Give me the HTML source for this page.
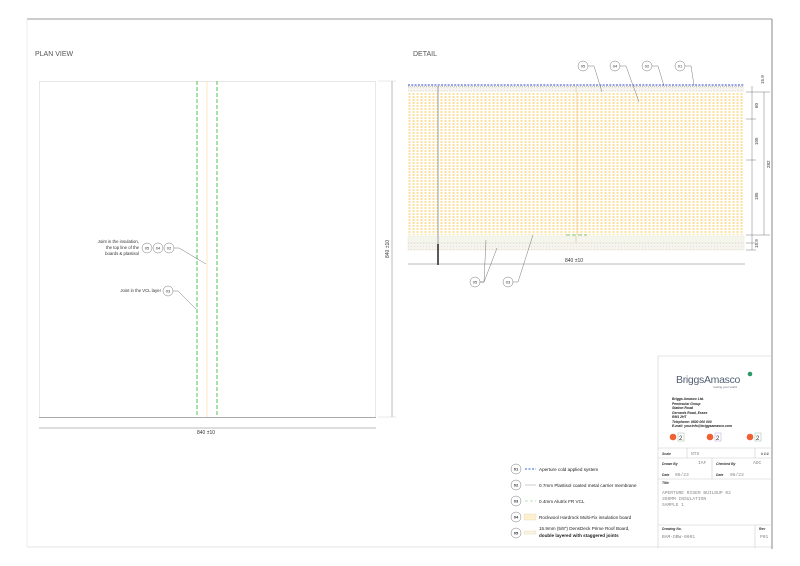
<!DOCTYPE html>
<html><head><meta charset="utf-8"><style>
html,body{margin:0;padding:0;background:#fff;width:800px;height:566px;overflow:hidden}
svg{display:block;font-family:"Liberation Sans",sans-serif}
</style></head><body>
<svg width="800" height="566" viewBox="0 0 800 566" xmlns="http://www.w3.org/2000/svg">
<defs>
<pattern id="ins" width="4" height="3" patternUnits="userSpaceOnUse">
<rect x="0.5" y="0" width="2" height="2" fill="#fbe0a0"/>
</pattern>
<pattern id="brd" width="3" height="3" patternUnits="userSpaceOnUse">
<rect width="3" height="3" fill="#f6f4ee"/><rect x="0" y="0" width="1" height="1" fill="#e4e0d4"/>
</pattern>
</defs>
<line x1="27" y1="19" x2="772" y2="19" stroke="#999" stroke-width="1"/>
<line x1="27" y1="19" x2="27" y2="547" stroke="#eee" stroke-width="1"/>
<line x1="27" y1="547" x2="772" y2="547" stroke="#e6e6e6" stroke-width="1"/>
<line x1="772" y1="19" x2="772" y2="549" stroke="#888" stroke-width="1"/>

<text x="35" y="56" font-size="7" fill="#555">PLAN VIEW</text>
<text x="413" y="56" font-size="7" fill="#555">DETAIL</text>

<rect x="39.5" y="81.5" width="336" height="336" fill="none" stroke="#e8e8e8"/>
<line x1="39" y1="417.5" x2="376" y2="417.5" stroke="#aaa" stroke-width="1"/>
<line x1="197" y1="81" x2="197" y2="417" stroke="#7ccf7c" stroke-width="1.3" stroke-dasharray="4,2"/>
<line x1="217" y1="81" x2="217" y2="417" stroke="#7ccf7c" stroke-width="1.3" stroke-dasharray="4,2"/>
<line x1="207" y1="81" x2="207" y2="417" stroke="#fbe3b0" stroke-width="0.8"/>
<line x1="39" y1="428" x2="376" y2="428" stroke="#555" stroke-width="0.4"/>
<text x="197" y="434" font-size="5" fill="#333">840 ±10</text>
<line x1="392" y1="81" x2="392" y2="417" stroke="#555" stroke-width="0.4"/>
<line x1="378" y1="81" x2="396" y2="81" stroke="#ccc" stroke-width="0.4"/>
<line x1="378" y1="417" x2="396" y2="417" stroke="#ccc" stroke-width="0.4"/>
<text transform="translate(389,258) rotate(-90)" font-size="5" fill="#333">840 ±10</text>
<g font-size="4.3" fill="#333" text-anchor="end">
<text x="139" y="243">Joint in the insulation,</text>
<text x="139" y="249">the top line of the</text>
<text x="139" y="255">boards &amp; plastisol</text>
<text x="161" y="292">Joint in the VCL layer</text>
</g>
<g fill="#fff" stroke="#777" stroke-width="0.5">
<circle cx="147" cy="248" r="5"/><circle cx="158" cy="248" r="5"/><circle cx="169" cy="248" r="5"/><circle cx="168" cy="291" r="5"/>
</g>
<g font-size="4" fill="#333" text-anchor="middle">
<text x="147" y="249.5">05</text><text x="158" y="249.5">04</text><text x="169" y="249.5">02</text><text x="168" y="292.5">03</text>
</g>
<polyline points="174,248 179,248 206,264" fill="none" stroke="#555" stroke-width="0.4"/>
<polyline points="173,291 178,291 196,309" fill="none" stroke="#555" stroke-width="0.4"/>

<rect x="408" y="86" width="336" height="6" fill="url(#brd)"/>
<rect x="408" y="92" width="336" height="143" fill="url(#ins)"/>
<rect x="408" y="236" width="336" height="7" fill="#f4f6ee" stroke="#e6e2cc" stroke-width="0.4"/>
<rect x="408" y="243" width="336" height="7" fill="url(#brd)" stroke="#e6e2cc" stroke-width="0.4"/>
<line x1="408" y1="85" x2="744" y2="85" stroke="#3344cc" stroke-width="0.9" stroke-dasharray="2,1.3"/>
<line x1="408" y1="86.5" x2="744" y2="86.5" stroke="#999" stroke-width="0.6" stroke-dasharray="1,1"/>
<line x1="576" y1="86" x2="576" y2="92" stroke="#e8c070" stroke-width="0.5"/>
<line x1="577" y1="92" x2="577" y2="235" stroke="#f5c070" stroke-width="0.6"/>
<line x1="566" y1="235" x2="587" y2="235" stroke="#6b6" stroke-width="0.8" stroke-dasharray="4,2"/>
<line x1="576" y1="236" x2="576" y2="243" stroke="#d8b870" stroke-width="0.5"/>
<line x1="438" y1="86" x2="438" y2="244" stroke="#888" stroke-width="0.8"/>
<line x1="438" y1="244" x2="438" y2="265" stroke="#222" stroke-width="1.5"/>
<line x1="408" y1="264" x2="745" y2="264" stroke="#555" stroke-width="0.4"/>
<text x="565" y="262" font-size="5" fill="#333">840 ±10</text>
<g stroke="#555" stroke-width="0.4">
<line x1="752" y1="86" x2="752" y2="250"/>
<line x1="764" y1="92" x2="764" y2="235"/>
<line x1="746" y1="92" x2="770" y2="92"/>
<line x1="746" y1="119" x2="756" y2="119"/>
<line x1="746" y1="160" x2="756" y2="160"/>
<line x1="746" y1="235" x2="770" y2="235"/>
<line x1="746" y1="243" x2="756" y2="243"/>
<line x1="746" y1="250" x2="756" y2="250"/>
</g>
<g font-size="4.5" fill="#333">
<text transform="translate(764,84) rotate(-90)">15.9</text>
<text transform="translate(758,108) rotate(-90)">60</text>
<text transform="translate(758,145) rotate(-90)">105</text>
<text transform="translate(770,168) rotate(-90)">282</text>
<text transform="translate(758,200) rotate(-90)">185</text>
<text transform="translate(758,248) rotate(-90)">15.9</text>
</g>
<g fill="#fff" stroke="#777" stroke-width="0.5">
<circle cx="583" cy="66" r="5"/><circle cx="615" cy="66" r="5"/><circle cx="647" cy="66" r="5"/><circle cx="680" cy="66" r="5"/>
<circle cx="475" cy="282" r="5"/><circle cx="508" cy="282" r="5"/>
</g>
<g font-size="4" fill="#333" text-anchor="middle">
<text x="583" y="67.5">05</text><text x="615" y="67.5">04</text><text x="647" y="67.5">02</text><text x="680" y="67.5">01</text>
<text x="475" y="283.5">05</text><text x="508" y="283.5">03</text>
</g>
<g fill="none" stroke="#555" stroke-width="0.4">
<polyline points="588,66 594,66 602,92"/>
<polyline points="620,66 626,66 639,102"/>
<polyline points="652,66 658,66 664,86"/>
<polyline points="685,66 691,66 694,85"/>
<polyline points="480,282 484,282 486,240"/>
<polyline points="480,282 484,282 497,248"/>
<polyline points="513,282 518,282 533,235"/>
</g>

<g fill="#fff" stroke="#777" stroke-width="0.5">
<circle cx="516" cy="469" r="5"/><circle cx="516" cy="485" r="5"/><circle cx="516" cy="501" r="5"/><circle cx="516" cy="517" r="5"/><circle cx="516" cy="533" r="5"/>
</g>
<g font-size="4" fill="#333" text-anchor="middle" font-weight="bold">
<text x="516" y="470.5">01</text><text x="516" y="486.5">02</text><text x="516" y="502.5">03</text><text x="516" y="518.5">04</text><text x="516" y="534.5">05</text>
</g>
<line x1="525" y1="469" x2="536" y2="469" stroke="#36c" stroke-width="1" stroke-dasharray="2,1.5"/>
<line x1="525" y1="485" x2="536" y2="485" stroke="#aaa" stroke-width="0.6"/>
<line x1="525" y1="501" x2="536" y2="501" stroke="#7c7" stroke-width="0.6" stroke-dasharray="3,2"/>
<rect x="524" y="514" width="12" height="6" fill="#fdf0d0" stroke="#e8d8a8" stroke-width="0.4"/>
<rect x="524" y="531" width="12" height="3" fill="#f8f4e4" stroke="#e0d8a8" stroke-width="0.4"/>
<g font-size="4.6" fill="#222">
<text x="539" y="471">Aperture cold applied system</text>
<text x="539" y="487">0.7mm Plastisol coated metal carrier membrane</text>
<text x="539" y="503">0.4mm Alutrix FR VCL</text>
<text x="539" y="519">Rockwool Hardrock Multi-Fix insulation board</text>
<text x="539" y="530">15.9mm (5/8") DensDeck Prime Roof Board,</text>
<text x="539" y="537" font-weight="bold">double layered with staggered joints</text>
</g>

<g stroke="#ccc" stroke-width="0.6" fill="none">
<line x1="658" y1="356" x2="658" y2="548"/>
<line x1="658" y1="356" x2="772" y2="356"/>
<line x1="658" y1="448" x2="772" y2="448"/>
<line x1="658" y1="458" x2="772" y2="458"/>
<line x1="658" y1="479" x2="772" y2="479"/>
<line x1="658" y1="525" x2="772" y2="525"/>
<line x1="687" y1="448" x2="687" y2="458"/>
<line x1="755" y1="448" x2="755" y2="458"/>
<line x1="712" y1="458" x2="712" y2="479"/>
<line x1="755" y1="525" x2="755" y2="548"/>
</g>
<text x="676" y="383" font-size="10.5" fill="#556075" letter-spacing="-0.3">BriggsAmasco</text>
<circle cx="750" cy="374" r="2.3" fill="#2a9a6a"/>
<text x="713" y="388" font-size="3" fill="#667">roofing your world</text>
<g font-size="3.4" fill="#222" font-style="italic" font-weight="bold">
<text x="672" y="400">Briggs Amasco Ltd.</text>
<text x="672" y="405">Peninsular Group</text>
<text x="672" y="409">Station Road</text>
<text x="672" y="414">Gerrards Road, Essex</text>
<text x="672" y="418">RM1 2HT</text>
<text x="672" y="423">Telephone: 0800 000 000</text>
<text x="672" y="427">E-mail: yourinfo@briggsamasco.com</text>
</g>
<g>
<circle cx="673" cy="437" r="3.3" fill="#f06030"/><rect x="678" y="433" width="6" height="8" fill="none" stroke="#8a8" stroke-width="0.4"/><text x="679" y="440" font-size="6" fill="#333">2</text>
<circle cx="710" cy="437" r="3.3" fill="#f06030"/><rect x="715" y="433" width="6" height="8" fill="none" stroke="#a8c" stroke-width="0.4"/><text x="716" y="440" font-size="6" fill="#333">2</text>
<circle cx="750" cy="437" r="3.3" fill="#f06030"/><rect x="755" y="433" width="6" height="8" fill="none" stroke="#8a8" stroke-width="0.4"/><text x="756" y="440" font-size="6" fill="#333">2</text>
</g>
<g font-size="3.4" fill="#333" font-style="italic" font-weight="bold">
<text x="662" y="455">Scale</text>
<text x="761" y="455"># 1:1</text>
<text x="662" y="465">Drawn By</text>
<text x="716" y="465">Checked By</text>
<text x="662" y="476">Date</text>
<text x="716" y="476">Date</text>
<text x="662" y="484">Title</text>
<text x="662" y="530">Drawing No.</text>
<text x="759" y="530">Rev</text>
</g>
<g font-size="4.6" fill="#888" font-family="Liberation Mono,monospace">
<text x="691" y="455">NTS</text>
<text x="698" y="464">IAF</text>
<text x="753" y="464">ADC</text>
<text x="675" y="476">06/23</text>
<text x="730" y="476">06/23</text>
<text x="662" y="494">APERTURE RISER BUILDUP 02</text>
<text x="662" y="500">350MM INSULATION</text>
<text x="662" y="506">SAMPLE 1</text>
<text x="662" y="538">BAM-DBW-0001</text>
<text x="760" y="538">P01</text>
</g>
</svg>
</body></html>
